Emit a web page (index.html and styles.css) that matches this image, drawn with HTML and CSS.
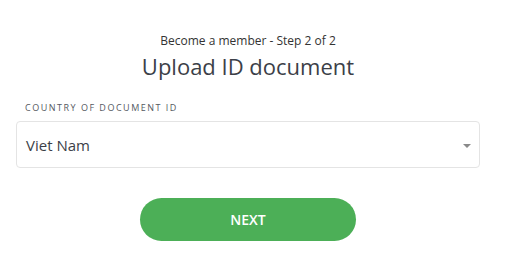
FILE: index.html
```html
<!DOCTYPE html>
<html>
<head>
<meta charset="utf-8">
<link rel="stylesheet" href="styles.css">
</head>
<body>
<div class="page">
  <p class="step">Become a member - Step 2 of 2</p>
  <h1 class="title">Upload ID document</h1>
  <label class="label">COUNTRY OF DOCUMENT ID</label>
  <div class="select">
    <span class="value">Viet Nam</span>
    <svg class="caret" width="8" height="4" viewBox="0 0 8 4"><path d="M0 0H8L4 4Z" fill="#8a8a8a"/></svg>
  </div>
  <div class="actions">
    <button class="next">NEXT</button>
  </div>
</div>
</body>
</html>
```

FILE: styles.css
```css
html, body {
  margin: 0;
  padding: 0;
  background: #fff;
}
body {
  font-family: "Open Sans", sans-serif;
  color: #3c3f48;
}
.page {
  width: 464px;
  margin-left: 16px;
  padding-top: 33px;
  display: flex;
  flex-direction: column;
}
.step {
  margin: 0;
  text-align: center;
  font-size: 12px;
  line-height: 16px;
  color: #333;
}
.title {
  margin: 2px 0 0;
  text-align: center;
  font-size: 22px;
  line-height: 30px;
  font-weight: 400;
  color: #3c3f48;
}
.label {
  margin: 21px 0 0 9px;
  font-size: 9px;
  line-height: 12px;
  letter-spacing: 1.5px;
  color: #55595f;
}
.select {
  margin-top: 7px;
  height: 47px;
  box-sizing: border-box;
  border: 1px solid #e4e4e4;
  border-radius: 4px;
  display: flex;
  align-items: center;
  justify-content: space-between;
  padding: 0 8px 0 9px;
}
.value {
  font-size: 15px;
  color: #3c3f48;
}
.caret {
  display: block;
  margin-top: 2px;
}
.actions {
  margin-top: 30px;
  display: flex;
  justify-content: center;
}
.next {
  width: 216px;
  height: 43px;
  border: none;
  border-radius: 22px;
  background: #4caf57;
  color: #fff;
  font-family: "Open Sans", sans-serif;
  font-size: 14px;
  font-weight: 600;
  cursor: pointer;
}
```
